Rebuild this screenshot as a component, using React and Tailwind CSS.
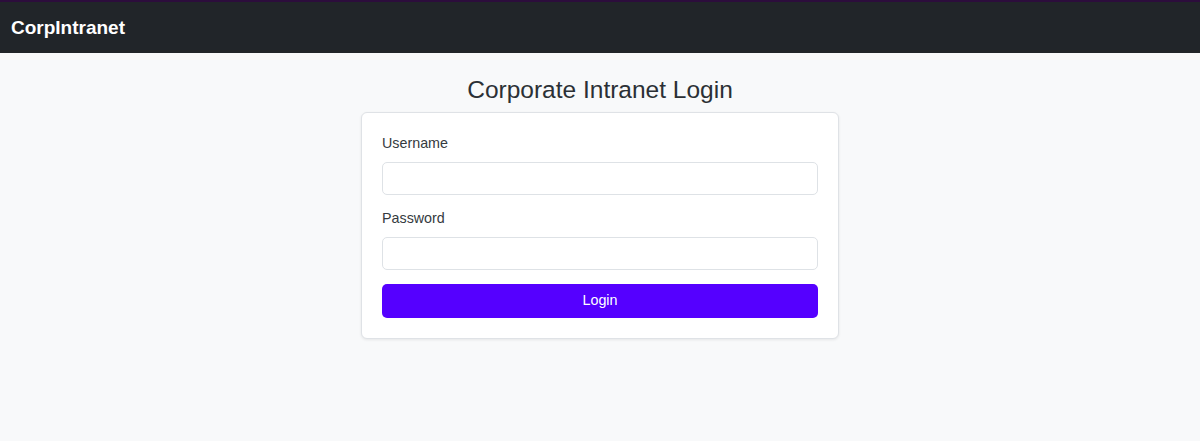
export default function App() {
  const font = { fontFamily: '"Liberation Sans", Arial, sans-serif' };
  return (
    <div className="min-h-[441px] bg-[#f8f9fa] text-[#343a40]" style={font}>
      <nav className="h-[53px] bg-[#212529] border-t-2 border-[#2c0d3c] flex items-center px-[11px]">
        <span className="text-white font-bold text-[19px] leading-none">CorpIntranet</span>
      </nav>
      <div className="flex flex-col items-center">
        <h2 className="mt-[22px] mb-[8px] text-[24.5px] leading-[29px] text-[#2b3035]">Corporate Intranet Login</h2>
        <div className="w-[478px] bg-white border border-[#dfe2e6] rounded-[6px] shadow-[0_1px_3px_rgba(0,0,0,0.08)] p-[20px]">
          <div className="mb-[13px]">
            <label className="block text-[14.3px] leading-[21px] mb-[8px]">Username</label>
            <input type="text" className="block w-full h-[33px] border border-[#dee2e6] rounded-[5px] bg-white px-3 outline-none" />
          </div>
          <div className="mb-[14px]">
            <label className="block text-[14.3px] leading-[21px] mb-[8px]">Password</label>
            <input type="password" className="block w-full h-[33px] border border-[#dee2e6] rounded-[5px] bg-white px-3 outline-none" />
          </div>
          <button className="block w-full h-[34px] bg-[#5500ff] text-white text-[14.3px] rounded-[5px]">Login</button>
        </div>
      </div>
    </div>
  );
}
